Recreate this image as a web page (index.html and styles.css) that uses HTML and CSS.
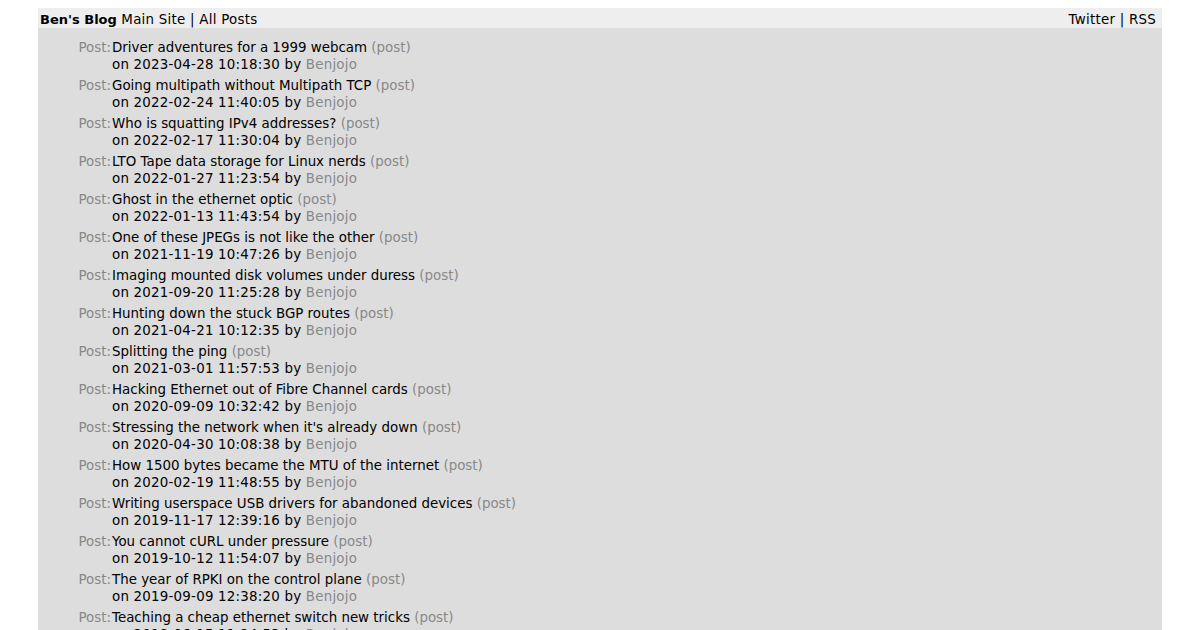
FILE: index.html
```html
<!DOCTYPE html>
<html>
<head>
<meta charset="utf-8">
<title>Ben's Blog</title>
<link rel="stylesheet" href="styles.css">
</head>
<body>
<div class="page">
  <div class="topbar">
    <div class="left"><b>Ben's Blog</b> <a href="#">Main Site</a> | <a href="#">All Posts</a></div>
    <div class="right"><a href="#">Twitter</a> | <a href="#">RSS</a></div>
  </div>
  <div class="content">
    <div class="post"><span class="lbl">Post:</span><div class="body"><div><a href="#">Driver adventures for a 1999 webcam</a> <span class="muted">(post)</span></div><div class="meta">on 2023-04-28 10:18:30 by <span class="muted">Benjojo</span></div></div></div>
    <div class="post"><span class="lbl">Post:</span><div class="body"><div><a href="#">Going multipath without Multipath TCP</a> <span class="muted">(post)</span></div><div class="meta">on 2022-02-24 11:40:05 by <span class="muted">Benjojo</span></div></div></div>
    <div class="post"><span class="lbl">Post:</span><div class="body"><div><a href="#">Who is squatting IPv4 addresses?</a> <span class="muted">(post)</span></div><div class="meta">on 2022-02-17 11:30:04 by <span class="muted">Benjojo</span></div></div></div>
    <div class="post"><span class="lbl">Post:</span><div class="body"><div><a href="#">LTO Tape data storage for Linux nerds</a> <span class="muted">(post)</span></div><div class="meta">on 2022-01-27 11:23:54 by <span class="muted">Benjojo</span></div></div></div>
    <div class="post"><span class="lbl">Post:</span><div class="body"><div><a href="#">Ghost in the ethernet optic</a> <span class="muted">(post)</span></div><div class="meta">on 2022-01-13 11:43:54 by <span class="muted">Benjojo</span></div></div></div>
    <div class="post"><span class="lbl">Post:</span><div class="body"><div><a href="#">One of these JPEGs is not like the other</a> <span class="muted">(post)</span></div><div class="meta">on 2021-11-19 10:47:26 by <span class="muted">Benjojo</span></div></div></div>
    <div class="post"><span class="lbl">Post:</span><div class="body"><div><a href="#">Imaging mounted disk volumes under duress</a> <span class="muted">(post)</span></div><div class="meta">on 2021-09-20 11:25:28 by <span class="muted">Benjojo</span></div></div></div>
    <div class="post"><span class="lbl">Post:</span><div class="body"><div><a href="#">Hunting down the stuck BGP routes</a> <span class="muted">(post)</span></div><div class="meta">on 2021-04-21 10:12:35 by <span class="muted">Benjojo</span></div></div></div>
    <div class="post"><span class="lbl">Post:</span><div class="body"><div><a href="#">Splitting the ping</a> <span class="muted">(post)</span></div><div class="meta">on 2021-03-01 11:57:53 by <span class="muted">Benjojo</span></div></div></div>
    <div class="post"><span class="lbl">Post:</span><div class="body"><div><a href="#">Hacking Ethernet out of Fibre Channel cards</a> <span class="muted">(post)</span></div><div class="meta">on 2020-09-09 10:32:42 by <span class="muted">Benjojo</span></div></div></div>
    <div class="post"><span class="lbl">Post:</span><div class="body"><div><a href="#">Stressing the network when it's already down</a> <span class="muted">(post)</span></div><div class="meta">on 2020-04-30 10:08:38 by <span class="muted">Benjojo</span></div></div></div>
    <div class="post"><span class="lbl">Post:</span><div class="body"><div><a href="#">How 1500 bytes became the MTU of the internet</a> <span class="muted">(post)</span></div><div class="meta">on 2020-02-19 11:48:55 by <span class="muted">Benjojo</span></div></div></div>
    <div class="post"><span class="lbl">Post:</span><div class="body"><div><a href="#">Writing userspace USB drivers for abandoned devices</a> <span class="muted">(post)</span></div><div class="meta">on 2019-11-17 12:39:16 by <span class="muted">Benjojo</span></div></div></div>
    <div class="post"><span class="lbl">Post:</span><div class="body"><div><a href="#">You cannot cURL under pressure</a> <span class="muted">(post)</span></div><div class="meta">on 2019-10-12 11:54:07 by <span class="muted">Benjojo</span></div></div></div>
    <div class="post"><span class="lbl">Post:</span><div class="body"><div><a href="#">The year of RPKI on the control plane</a> <span class="muted">(post)</span></div><div class="meta">on 2019-09-09 12:38:20 by <span class="muted">Benjojo</span></div></div></div>
    <div class="post"><span class="lbl">Post:</span><div class="body"><div><a href="#">Teaching a cheap ethernet switch new tricks</a> <span class="muted">(post)</span></div><div class="meta">on 2019-06-15 11:24:53 by <span class="muted">Benjojo</span></div></div></div>
  </div>
</div>
</body>
</html>
```
FILE: styles.css
```css
html, body {
  margin: 0;
  padding: 0;
  background: #fff;
}
body {
  padding: 8px 0 0;
  font-family: "DejaVu Sans", Verdana, sans-serif;
  font-size: 13.4px;
  line-height: 17px;
  color: #000;
}
a {
  color: #000;
  text-decoration: none;
}
.page {
  margin: 0 38px;
}
.topbar {
  display: flex;
  justify-content: space-between;
  align-items: center;
  height: 20px;
  padding: 2px 6px 0 2px;
  box-sizing: border-box;
  background: #eeeeee;
}
.topbar b {
  font-size: 13px;
  letter-spacing: 0;
}
.left, .right {
  letter-spacing: 0.25px;
}
.content {
  background: #dddddd;
  padding: 9px 0 20px;
}
.post {
  display: flex;
  padding: 2px 0;
}
.lbl {
  width: 73px;
  flex: none;
  text-align: right;
  color: #888;
}
.body {
  padding-left: 1px;
}
.meta {
  letter-spacing: 0.22px;
}
.muted {
  color: #888;
}
```
